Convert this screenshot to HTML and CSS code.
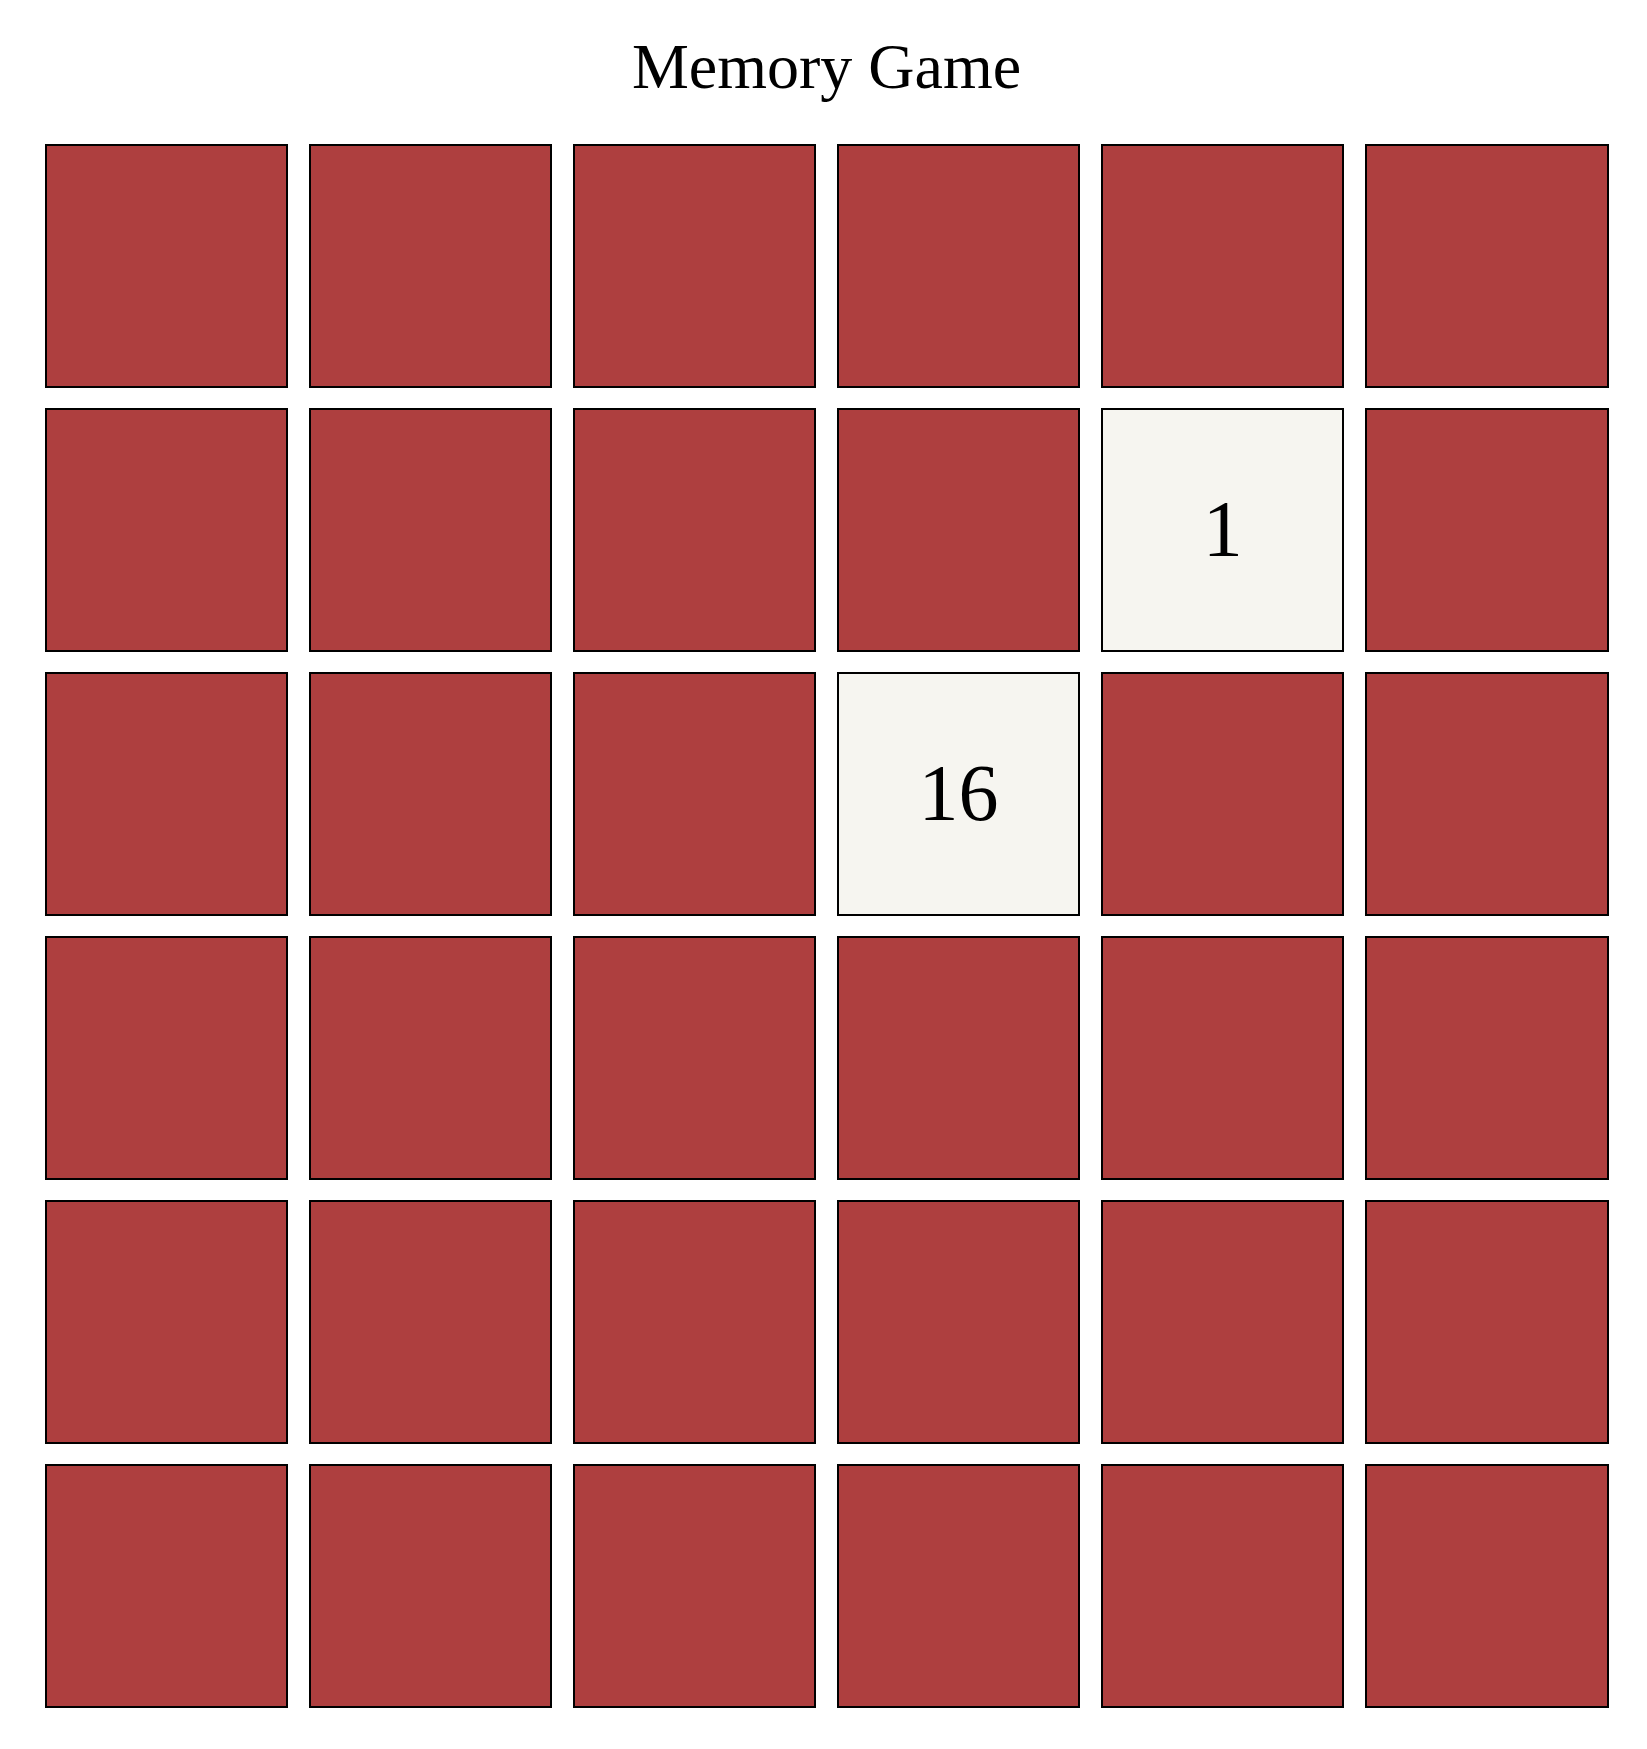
FILE: index.html
```html
<!DOCTYPE html>
<html lang="en">
<head>
<meta charset="utf-8">
<title>Memory Game</title>
<link rel="stylesheet" href="styles.css">
</head>
<body>
<main class="page">
  <h1 class="title">Memory Game</h1>
  <div class="board">
    <div class="card"></div><div class="card"></div><div class="card"></div><div class="card"></div><div class="card"></div><div class="card"></div>
    <div class="card"></div><div class="card"></div><div class="card"></div><div class="card"></div><div class="card card-open">1</div><div class="card"></div>
    <div class="card"></div><div class="card"></div><div class="card"></div><div class="card card-open">16</div><div class="card"></div><div class="card"></div>
    <div class="card"></div><div class="card"></div><div class="card"></div><div class="card"></div><div class="card"></div><div class="card"></div>
    <div class="card"></div><div class="card"></div><div class="card"></div><div class="card"></div><div class="card"></div><div class="card"></div>
    <div class="card"></div><div class="card"></div><div class="card"></div><div class="card"></div><div class="card"></div><div class="card"></div>
  </div>
</main>
</body>
</html>
```
FILE: styles.css
```css
html, body {
  margin: 0;
  padding: 0;
  background: #ffffff;
}

body {
  font-family: "Liberation Serif", "Times New Roman", serif;
  color: #000000;
}

.page {
  width: 1564px;
  padding: 30px 0 0 44.5px;
}

.title {
  margin: 0 0 40px;
  font-size: 64px;
  font-weight: normal;
  line-height: normal;
  text-align: center;
}

.board {
  display: grid;
  grid-template-columns: repeat(6, 243.6px);
  grid-auto-rows: 243.6px;
  gap: 20.5px;
}

.card {
  box-sizing: border-box;
  border: 2px solid #000000;
  background: #ae3f3f;
  display: flex;
  align-items: center;
  justify-content: center;
  font-size: 80px;
  line-height: normal;
}

.card-open {
  background: #f6f5f0;
}
```
